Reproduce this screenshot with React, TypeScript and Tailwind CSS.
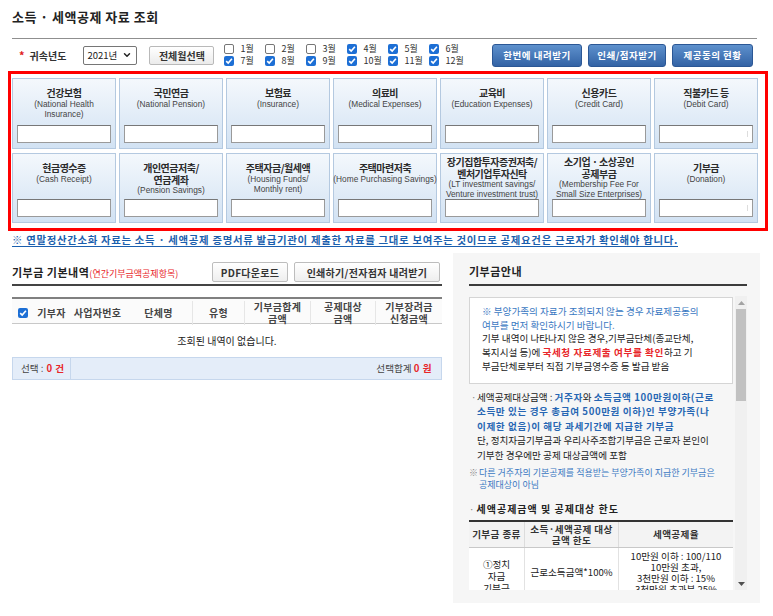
import { ChevronDown } from 'lucide-react'

interface Item {
  title: string[]
  sub: string[]
  tight?: boolean
}

const months = [
  [1, 7],
  [2, 8],
  [3, 9],
  [4, 10],
  [5, 11],
  [6, 12],
]
const checkedMonths = [4, 5, 6, 7, 8, 9, 10, 11, 12]

const items: Item[] = [
  { title: ['건강보험'], sub: ['(National Health', 'Insurance)'] },
  { title: ['국민연금'], sub: ['(National Pension)'] },
  { title: ['보험료'], sub: ['(Insurance)'] },
  { title: ['의료비'], sub: ['(Medical Expenses)'] },
  { title: ['교육비'], sub: ['(Education Expenses)'] },
  { title: ['신용카드'], sub: ['(Credit Card)'] },
  { title: ['직불카드 등'], sub: ['(Debit Card)'] },
  { title: ['현금영수증'], sub: ['(Cash Receipt)'] },
  { title: ['개인연금저축/', '연금계좌'], sub: ['(Pension Savings)'] },
  { title: ['주택자금/월세액'], sub: ['(Housing Funds/', 'Monthly rent)'] },
  { title: ['주택마련저축'], sub: ['(Home Purchasing Savings)'] },
  {
    title: ['장기집합투자증권저축/', '벤처기업투자신탁'],
    sub: ['(LT investment savings/', 'Venture investment trust)'],
    tight: true,
  },
  {
    title: ['소기업 · 소상공인', '공제부금'],
    sub: ['(Membership Fee For', 'Small Size Enterprises)'],
    tight: true,
  },
  { title: ['기부금'], sub: ['(Donation)'] },
]

const Check = ({ on }: { on: boolean }) =>
  on ? (
    <span className="flex h-[10px] w-[10px] items-center justify-center rounded-[2px] bg-[#1d6fd5]">
      <svg width="8" height="8" viewBox="0 0 8 8">
        <path d="M1.2 4.1 L3.2 6.1 L6.9 1.8" stroke="white" strokeWidth="1.6" fill="none" />
      </svg>
    </span>
  ) : (
    <span className="h-[10px] w-[10px] rounded-[2px] border border-[#767676] bg-white" />
  )

const Cell = ({ item, tick }: { item: Item; tick?: boolean }) => (
  <div className="flex flex-col items-center border border-[#b4c9e0] bg-linear-to-b from-[#f4f8fc] to-[#d2e2f3] px-[4px] pb-[5px]">
    <div className={`flex flex-col items-center text-center ${item.tight ? 'pt-[2px]' : 'pt-[8px]'}`}>
      {item.title.map((t) => (
        <span key={t} className="whitespace-nowrap text-[10px] font-bold leading-[11.5px] tracking-[-0.5px] text-[#2b2b2b]">
          {t}
        </span>
      ))}
      {item.sub.map((t) => (
        <span key={t} className="whitespace-nowrap font-['Liberation_Sans'] text-[8.3px] leading-[10px] text-[#444]">
          {t}
        </span>
      ))}
    </div>
    <div className="relative mt-auto h-[18px] w-full border border-[#9a9a9a] border-t-[#777] bg-white">
      {tick && <span className="absolute right-[4px] top-[5px] h-[6px] w-px bg-[#ddd]" />}
    </div>
  </div>
)

const headCols = [
  { label: ['기부자'] },
  { label: ['사업자번호'] },
  { label: ['단체명'] },
  { label: ['유형'], sep: true },
  { label: ['기부금합계', '금액'], sep: true },
  { label: ['공제대상', '금액'], sep: true },
  { label: ['기부장려금', '신청금액'], sep: true },
]

export default function App() {
  return (
    <div className="h-[616px] w-[773px] overflow-hidden bg-white font-['Noto_Sans_CJK_KR',sans-serif] text-[#333]">
      <h1 className="h-[38px] pl-[12px] pt-[8px] text-[13px] font-bold leading-[18px] tracking-[0.5px] text-[#222]">
        소득 · 세액공제 자료 조회
      </h1>

      {/* 조회 조건 */}
      <div className="ml-[12px] flex h-[33px] w-[745px] items-center border-t border-[#8f8f8f]">
        <span className="ml-[7px] text-[11px] font-bold text-[#e02020]">*</span>
        <span className="ml-[5px] text-[10px] font-bold text-[#333]">귀속년도</span>
        <div className="ml-[17px] flex h-[19px] w-[54px] items-center justify-between rounded-[2px] border border-[#767676] bg-white pl-[3px] pr-[4px] text-[9.5px] text-[#222]">
          2021년
          <ChevronDown size={10} strokeWidth={3.5} />
        </div>
        <button className="ml-[12px] h-[19px] w-[65px] rounded-[2px] border border-[#b9b9b9] bg-linear-to-b from-white to-[#ebebeb] text-[10px] font-bold text-[#333]">
          전체월선택
        </button>
        <div className="ml-[10px] flex">
          {months.map((pair) => (
            <div key={pair[0]} className="flex w-[41px] flex-col gap-[1.5px]">
              {pair.map((m) => (
                <div key={m} className="flex h-[10px] items-center gap-[6px]">
                  <Check on={checkedMonths.includes(m)} />
                  <span className="text-[9px] leading-[10px] text-[#333]">{m}월</span>
                </div>
              ))}
            </div>
          ))}
        </div>
        <div className="ml-auto mr-[4px] flex gap-[6px]">
          {[
            { t: '한번에 내려받기', w: 'w-[90px]' },
            { t: '인쇄/점자받기', w: 'w-[78px]' },
            { t: '제공동의 현황', w: 'w-[81px]' },
          ].map((b) => (
            <button
              key={b.t}
              className={`${b.w} h-[23px] rounded-[3px] border border-[#2b5795] bg-linear-to-b from-[#5e91cd] to-[#3363a5] text-[9.5px] font-bold tracking-[0.5px] text-white`}
            >
              {b.t}
            </button>
          ))}
        </div>
      </div>

      {/* 항목 */}
      <div className="ml-[8px] grid h-[160px] w-[760px] grid-cols-[repeat(7,104px)] grid-rows-[71px_70px] gap-x-[3px] gap-y-[4px] border-[3px] border-[#ff0000] pl-[1px] pt-[4px]">
        {items.map((it, i) => (
          <Cell key={it.title.join('')} item={it} tick={i === 6 || i === 13} />
        ))}
      </div>

      <p className="ml-[12px] mt-[2px] whitespace-nowrap text-[10.4px] font-bold leading-[14px] tracking-[0.7px] text-[#1b5fae] underline underline-offset-[2px]">
        ※ 연말정산간소화 자료는 소득 · 세액공제 증명서류 발급기관이 제출한 자료를 그대로 보여주는 것이므로 공제요건은 근로자가 확인해야 합니다.
      </p>

      <div className="mt-[6px] flex">
        {/* 기부금 기본내역 */}
        <div className="ml-[12px] w-[430px]">
          <div className="mt-[9px] flex h-[20px] items-center justify-between">
            <div className="flex items-baseline">
              <span className="text-[11px] font-bold tracking-[0.5px] text-[#222]">기부금 기본내역</span>
              <span className="text-[9px] text-[#e8262a]">(연간기부금액공제항목)</span>
            </div>
            <div className="mr-[2px] flex gap-[6px]">
              <button className="h-[20px] w-[76px] rounded-[2px] border border-[#bdbdbd] bg-linear-to-b from-white to-[#eeeeee] text-[10px] font-bold tracking-[0.3px] text-[#333]">
                PDF다운로드
              </button>
              <button className="h-[20px] w-[146px] rounded-[2px] border border-[#bdbdbd] bg-linear-to-b from-white to-[#eeeeee] text-[10px] font-bold tracking-[0.3px] text-[#333]">
                인쇄하기/전자점자 내려받기
              </button>
            </div>
          </div>
          <div className="mt-[2px] h-[2px] bg-[#444]" />

          <div className="mt-[11px] grid h-[27px] grid-cols-[21px_37px_55px_67px_52px_66px_65px_67px] border-t-2 border-b border-t-[#808080] border-b-[#c8c8c8] bg-[#fbfbfb]">
            <div className="flex items-center justify-center">
              <Check on />
            </div>
            {headCols.map((c) => (
              <div
                key={c.label.join('')}
                className={`my-[2px] flex flex-col items-center justify-center text-center text-[10px] font-bold leading-[12px] tracking-[0.3px] text-[#444] ${c.sep ? 'border-l border-[#e6e6e6]' : ''}`}
              >
                {c.label.map((l) => (
                  <span key={l} className="whitespace-nowrap">
                    {l}
                  </span>
                ))}
              </div>
            ))}
          </div>
          <div className="flex h-[33px] items-center justify-center text-[10px] text-[#222]">조회된 내역이 없습니다.</div>
          <div className="flex h-[23px] items-center border border-[#c6d7ed] bg-[#e4edf9] text-[9.6px]">
            <div className="flex h-full w-[58px] items-center border-r border-[#c6d7ed] pl-[8px] text-[#444]">
              선택 : <b className="ml-[3px] tracking-[0.5px] text-[#e8262a]">0 건</b>
            </div>
            <div className="ml-auto pr-[9px] text-[#444]">
              선택합계 <b className="tracking-[0.5px] text-[#e8262a]">0 원</b>
            </div>
          </div>
        </div>

        {/* 기부금안내 */}
        <div className="ml-[11px] h-[350px] w-[307px] bg-[#f6f6f6] pl-[16px] pr-[13px]">
          <h2 className="pt-[10px] text-[11px] font-bold leading-[16px] tracking-[0.5px] text-[#222]">기부금안내</h2>
          <div className="mt-[5px] h-[2px] bg-[#3c3c3c]" />
          <div className="mt-[10px] flex h-[294px]">
            <div className="w-[266px] overflow-hidden text-[9.6px] leading-[13.7px]">
              <div className="mt-px w-[264px] border border-[#d5d5d5] bg-white pb-[9px] pl-[12px] pt-[7px]">
                <p className="text-[#3a78c2]">
                  ※ 부양가족의 자료가 조회되지 않는 경우 자료제공동의
                  <br />
                  여부를 먼저 확인하시기 바랍니다.
                </p>
                <p className="text-[#222]">
                  기부 내역이 나타나지 않은 경우,기부금단체(종교단체,
                  <br />
                  복지시설 등)에 <b className="tracking-[0.6px] text-[#e8262a]">국세청 자료제출 여부를 확인</b>하고 기
                  <br />
                  부금단체로부터 직접 기부금영수증 등 발급 받음
                </p>
              </div>

              <div className="mt-[6px] flex leading-[14.5px] text-[#222]">
                <span className="w-[8px] pl-[2px] text-[#888]">·</span>
                <p>
                  세액공제대상금액 : <b className="tracking-[0.6px] text-[#2766b3]">거주자</b>와{' '}
                  <b className="tracking-[0.6px] text-[#2766b3]">소득금액 100만원이하(근로</b>
                  <br />
                  <b className="tracking-[0.6px] text-[#2766b3]">소득만 있는 경우 총급여 500만원 이하)인 부양가족(나</b>
                  <br />
                  <b className="tracking-[0.6px] text-[#2766b3]">이제한 없음)이 해당 과세기간에 지급한 기부금</b>
                  <br />
                  단, 정치자금기부금과 우리사주조합기부금은 근로자 본인이
                  <br />
                  기부한 경우에만 공제 대상금액에 포함
                </p>
              </div>

              <div className="mt-[5px] flex text-[9px] leading-[11.7px]">
                <span className="w-[10px] text-[#888]">※</span>
                <p className="text-[#3a78c2]">
                  다른 거주자의 기본공제를 적용받는 부양가족이 지급한 기부금은
                  <br />
                  공제대상이 아님
                </p>
              </div>

              <p className="mt-[12px] leading-[14px] text-[#222]">
                <span className="text-[#888]">·</span>{' '}
                <b className="text-[10px] tracking-[1px]">세액공제금액 및 공제대상 한도</b>
              </p>

              <div className="mt-[4px] w-[264px] border-t-2 border-[#333]">
                <div className="grid h-[26px] grid-cols-[55px_94px_115px] border-b border-[#c8c8c8] bg-[#f3f3f3] text-[9.6px] font-bold leading-[11px] tracking-[0.4px] text-[#333]">
                  <div className="flex items-center justify-center whitespace-nowrap">기부금 종류</div>
                  <div className="flex flex-col items-center justify-center border-l border-[#dcdcdc] text-center">
                    <span className="whitespace-nowrap">소득·세액공제 대상</span>
                    <span>금액 한도</span>
                  </div>
                  <div className="flex items-center justify-center border-l border-[#dcdcdc]">세액공제율</div>
                </div>
                <div className="grid h-[60px] grid-cols-[55px_94px_115px] bg-white text-[9.6px] leading-[11px] text-[#222]">
                  <div className="flex flex-col items-center justify-center pt-[8px] text-center leading-[12px]">
                    <span>①정치</span>
                    <span>자금</span>
                    <span>기부금</span>
                    <span>&nbsp;</span>
                  </div>
                  <div className="flex items-center justify-center border-l border-[#e2e2e2] pb-[12px]">
                    근로소득금액*100%
                  </div>
                  <div className="flex flex-col items-center justify-start border-l border-[#e2e2e2] pt-[3px] text-center leading-[11px]">
                    <span className="whitespace-nowrap">10만원 이하 : 100/110</span>
                    <span>10만원 초과,</span>
                    <span className="whitespace-nowrap">3천만원 이하 : 15%</span>
                    <span className="whitespace-nowrap">3천만원 초과분 25%</span>
                  </div>
                </div>
              </div>
            </div>

            {/* 스크롤바 */}
            <div className="ml-px flex w-[12px] flex-col bg-[#f0f0f0]">
              <div className="flex h-[13px] items-center justify-center">
                <svg width="7" height="4" viewBox="0 0 7 4">
                  <path d="M0 4 L3.5 0 L7 4 Z" fill="#a3a3a3" />
                </svg>
              </div>
              <div className="mx-[1px] h-[92px] bg-[#c1c1c1]" />
              <div className="mt-auto flex h-[13px] items-center justify-center">
                <svg width="7" height="4" viewBox="0 0 7 4">
                  <path d="M0 0 L3.5 4 L7 0 Z" fill="#505050" />
                </svg>
              </div>
            </div>
          </div>
        </div>
      </div>
    </div>
  )
}
